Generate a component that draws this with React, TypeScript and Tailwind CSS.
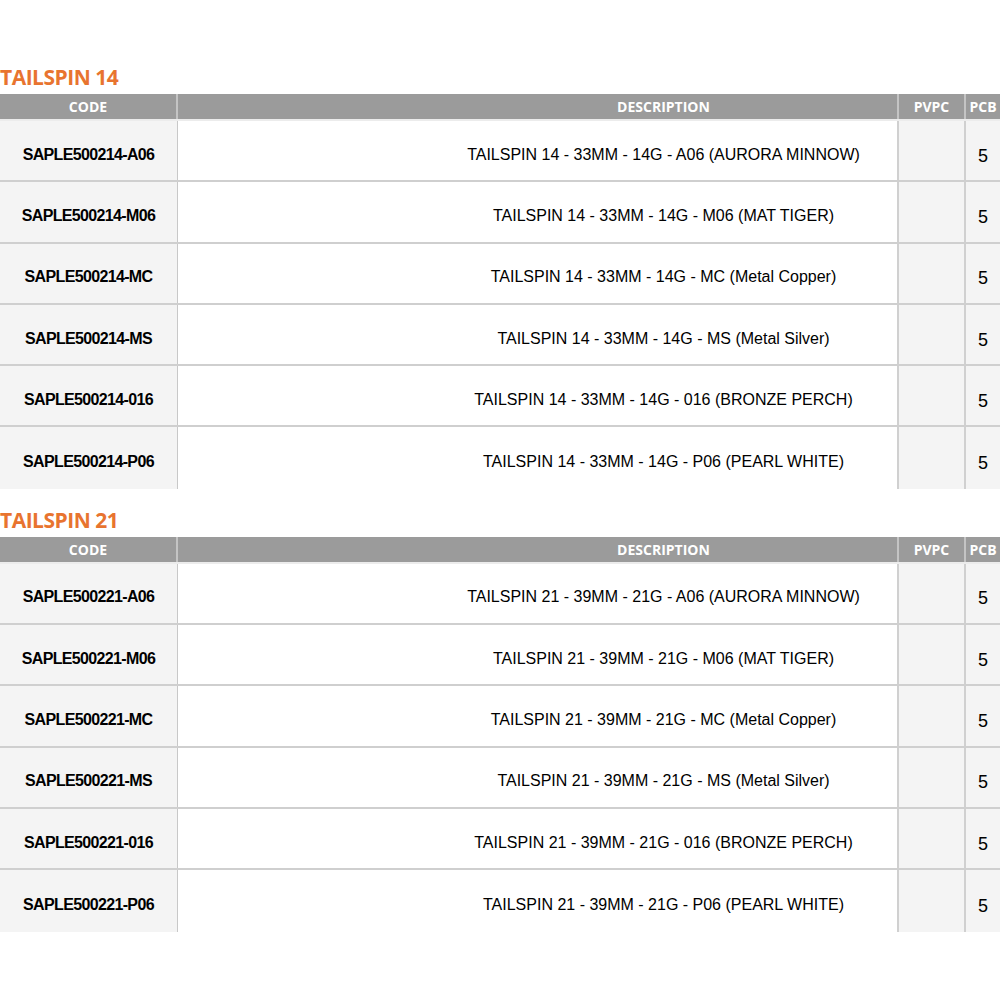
const sections = [
  {
    title: "TAILSPIN 14",
    rows: [
      { code: "SAPLE500214-A06", desc: "TAILSPIN 14 - 33MM - 14G - A06 (AURORA MINNOW)" },
      { code: "SAPLE500214-M06", desc: "TAILSPIN 14 - 33MM - 14G - M06 (MAT TIGER)" },
      { code: "SAPLE500214-MC", desc: "TAILSPIN 14 - 33MM - 14G - MC (Metal Copper)" },
      { code: "SAPLE500214-MS", desc: "TAILSPIN 14 - 33MM - 14G - MS (Metal Silver)" },
      { code: "SAPLE500214-016", desc: "TAILSPIN 14 - 33MM - 14G - 016 (BRONZE PERCH)" },
      { code: "SAPLE500214-P06", desc: "TAILSPIN 14 - 33MM - 14G - P06 (PEARL WHITE)" },
    ],
  },
  {
    title: "TAILSPIN 21",
    rows: [
      { code: "SAPLE500221-A06", desc: "TAILSPIN 21 - 39MM - 21G - A06 (AURORA MINNOW)" },
      { code: "SAPLE500221-M06", desc: "TAILSPIN 21 - 39MM - 21G - M06 (MAT TIGER)" },
      { code: "SAPLE500221-MC", desc: "TAILSPIN 21 - 39MM - 21G - MC (Metal Copper)" },
      { code: "SAPLE500221-MS", desc: "TAILSPIN 21 - 39MM - 21G - MS (Metal Silver)" },
      { code: "SAPLE500221-016", desc: "TAILSPIN 21 - 39MM - 21G - 016 (BRONZE PERCH)" },
      { code: "SAPLE500221-P06", desc: "TAILSPIN 21 - 39MM - 21G - P06 (PEARL WHITE)" },
    ],
  },
];

function Section({ title, rows }: { title: string; rows: { code: string; desc: string }[] }) {
  return (
    <div>
      {/* Title */}
      <div className="h-[31px] flex items-end text-[21px] font-bold tracking-[-0.5px] leading-none text-[#e8742f] font-['Open_Sans',sans-serif] pb-[4px]">
        {title}
      </div>

      {/* Header */}
      <div className="grid grid-cols-[178px_721px_67px_34px] h-[25px] bg-[#9b9b9b] text-white text-[14px] font-bold font-['Open_Sans',sans-serif] leading-[25px] border-b-2 border-[#ececec] box-content mt-[2px]">
        <div className="text-center border-r-2 border-[#c4c4c4]">CODE</div>
        <div className="text-center pl-[252px] border-r-2 border-[#c4c4c4]">DESCRIPTION</div>
        <div className="text-center border-r-2 border-[#c4c4c4]">PVPC</div>
        <div className="text-center">PCB</div>
      </div>

      {/* Rows */}
      <div>
        {rows.map((r, i) => (
          <div
            key={r.code}
            className={
              "grid grid-cols-[178px_721px_67px_34px] h-[61.3px] font-['Liberation_Sans',Arial,sans-serif] text-black " +
              (i < rows.length - 1 ? "border-b-2 border-[#cfcfcf]" : "")
            }
          >
            <div className="bg-[#f4f4f4] border-r border-[#c8c8c8] flex items-center justify-center pt-[8px] text-[16px] tracking-[-0.65px] font-bold">
              {r.code}
            </div>
            <div className="bg-white border-r-2 border-[#d0d0d0] flex items-center justify-center pl-[252px] pt-[8px] text-[16px]">
              {r.desc}
            </div>
            <div className="bg-[#f4f4f4] border-r-2 border-[#d0d0d0]" />
            <div className="bg-[#f4f4f4] flex items-center justify-center pt-[11px] text-[18px]">5</div>
          </div>
        ))}
      </div>
    </div>
  );
}

export default function App() {
  return (
    <div className="w-[1000px] h-[1000px] bg-white pt-[61px] flex flex-col gap-[15px] overflow-hidden">
      {sections.map((s) => (
        <Section key={s.title} title={s.title} rows={s.rows} />
      ))}
    </div>
  );
}
